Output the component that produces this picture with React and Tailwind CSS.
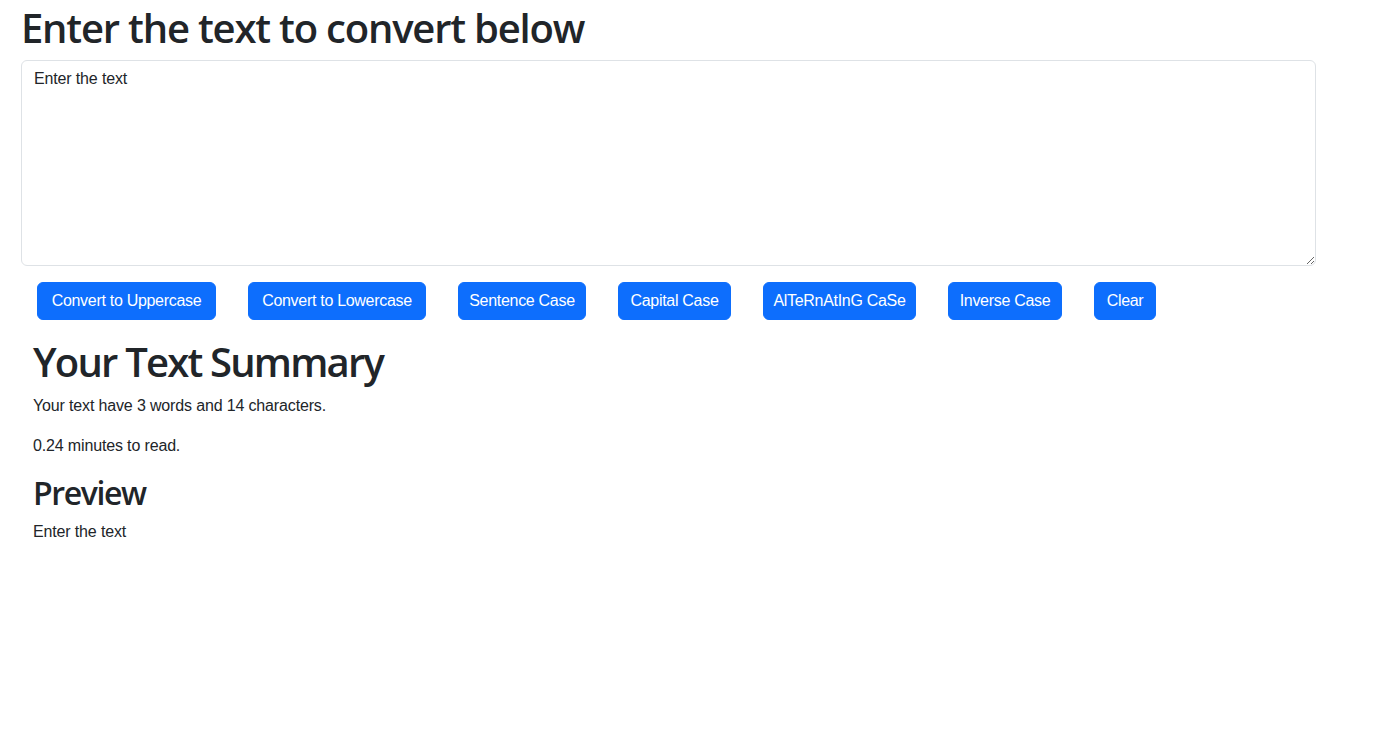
import { useState } from 'react'

const BUTTONS = [
  { label: 'Convert to Uppercase', w: 'w-[179px]' },
  { label: 'Convert to Lowercase', w: 'w-[178px]' },
  { label: 'Sentence Case', w: 'w-[128px]' },
  { label: 'Capital Case', w: 'w-[113px]' },
  { label: 'AlTeRnAtInG CaSe', w: 'w-[153px]' },
  { label: 'Inverse Case', w: 'w-[114px]' },
  { label: 'Clear', w: 'w-[62px]' },
]

function App() {
  const [text, setText] = useState('Enter the text')

  const words = text.split(/\s+/).filter(w => w.length > 0).length

  return (
    <div className="min-h-screen bg-white text-[#212529] font-['Segoe_UI','Liberation_Sans',sans-serif] text-base leading-6 tracking-[-0.15px]">
      <div className="w-[1295px] ml-[21px] pt-[4px]">
        <h1 className="text-[40px] leading-[48px] font-semibold mb-2 font-['Open_Sans',sans-serif] tracking-[-1.2px]">Enter the text to convert below</h1>
        <textarea
          rows={8}
          value={text}
          onChange={e => setText(e.target.value)}
          className="block w-full h-[206px] px-3 py-1.5 border border-[#dee2e6] rounded-md text-base leading-6 outline-none resize-y text-[#212529] tracking-[-0.15px]"
        />
        <div className="flex mt-4">
          {BUTTONS.map(b => (
            <button
              key={b.label}
              className={`${b.w} mx-4 h-[38px] flex items-center justify-center bg-[#0d6efd] border border-[#0d6efd] text-white text-base leading-6 rounded-md whitespace-nowrap tracking-[-0.3px]`}
            >
              {b.label}
            </button>
          ))}
        </div>
      </div>

      {/* Summary */}
      <div className="w-[1295px] ml-[21px] px-3 mt-[18px]">
        <h1 className="text-[40px] leading-[48px] font-semibold mb-2 font-['Open_Sans',sans-serif] tracking-[-1.8px]">Your Text Summary</h1>
        <p className="mb-4">Your text have {words} words and {text.length} characters.</p>
        <p className="mb-4">{(0.008 * words * 10).toFixed(2)} minutes to read.</p>
        <h2 className="text-[32px] leading-[38px] font-semibold mb-2 font-['Open_Sans',sans-serif] tracking-[-1.4px]">Preview</h2>
        <p>{text}</p>
      </div>
    </div>
  )
}

export default App
